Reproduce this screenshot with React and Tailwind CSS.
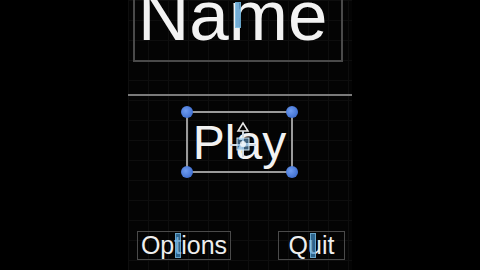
import React from 'react';

const Handle = ({ className }) => (
  <span
    className={`absolute w-[12px] h-[12px] rounded-full bg-[radial-gradient(circle_at_40%_40%,#6f9cf0,#2f5fc4)] ${className}`}
  />
);

const Pivot = ({ className }) => (
  <span className={`absolute w-[6px] bg-[#3f8fc9]/70 border border-[#8fd0f0]/60 ${className}`} />
);

const MoveGizmo = () => (
  <svg className="absolute left-[38px] top-[8px]" width="34" height="40" viewBox="0 0 34 40">
    <path d="M17 2 L12 10 L22 10 Z" fill="none" stroke="#e8e8e8" strokeWidth="1.5" />
    <line x1="17" y1="10" x2="17" y2="36" stroke="#cfd8e0" strokeWidth="2" />
    <line x1="4" y1="24" x2="30" y2="24" stroke="#cfd8e0" strokeWidth="2" />
    <rect x="11" y="17" width="12" height="12" fill="#6aa7d8" fillOpacity="0.55" stroke="#d8eefa" strokeWidth="1" />
    <circle cx="17" cy="23" r="3" fill="#ffffff" fillOpacity="0.8" />
  </svg>
);

export default function App() {
  return (
    <div
      className="w-[480px] h-[270px] overflow-hidden bg-black flex justify-center"
      style={{ fontFamily: '"Liberation Sans", Arial, sans-serif' }}
    >
      <div className="relative w-[224px] h-[270px] bg-[#040404] bg-[linear-gradient(#0e0e0e_1px,transparent_1px),linear-gradient(90deg,#0e0e0e_1px,transparent_1px)] bg-[size:20px_20px] flex flex-col">
        {/* title */}
        <div className="relative mt-[-22px] ml-[5px] w-[210px] border-2 border-[#4a4a4a] pb-[9px] pl-[3px]">
          <div className="text-[71px] leading-none text-[#f2f2f2]">Name</div>
          <Pivot className="left-[100px] top-[22px] h-[26px]" />
        </div>

        <div className="mt-[32px] h-[2px] w-full bg-[#7a7a7a]" />

        {/* play button */}
        <div className="relative mt-[15px] ml-[58px] w-[107px] h-[62px] border-2 border-[#9a9a9a] flex items-center justify-center">
          <div className="text-[48px] leading-none text-[#f2f2f2] mt-[2px]">Play</div>
          <MoveGizmo />
          <Handle className="left-[-7px] top-[-7px]" />
          <Handle className="right-[-7px] top-[-7px]" />
          <Handle className="left-[-7px] bottom-[-7px]" />
          <Handle className="right-[-7px] bottom-[-7px]" />
        </div>

        {/* bottom row */}
        <div className="mt-[58px] flex">
          <div className="relative ml-[9px] w-[94px] h-[29px] border border-[#4a4a4a] flex items-center justify-center">
            <div className="text-[25px] leading-none text-[#eeeeee]">Options</div>
            <Pivot className="left-[37px] top-[1px] h-[25px]" />
          </div>
          <div className="relative ml-[47px] w-[67px] h-[29px] border border-[#4a4a4a] flex items-center justify-center">
            <div className="text-[25px] leading-none text-[#eeeeee]">Quit</div>
            <Pivot className="left-[31px] top-[1px] h-[25px]" />
          </div>
        </div>
      </div>
    </div>
  );
}
